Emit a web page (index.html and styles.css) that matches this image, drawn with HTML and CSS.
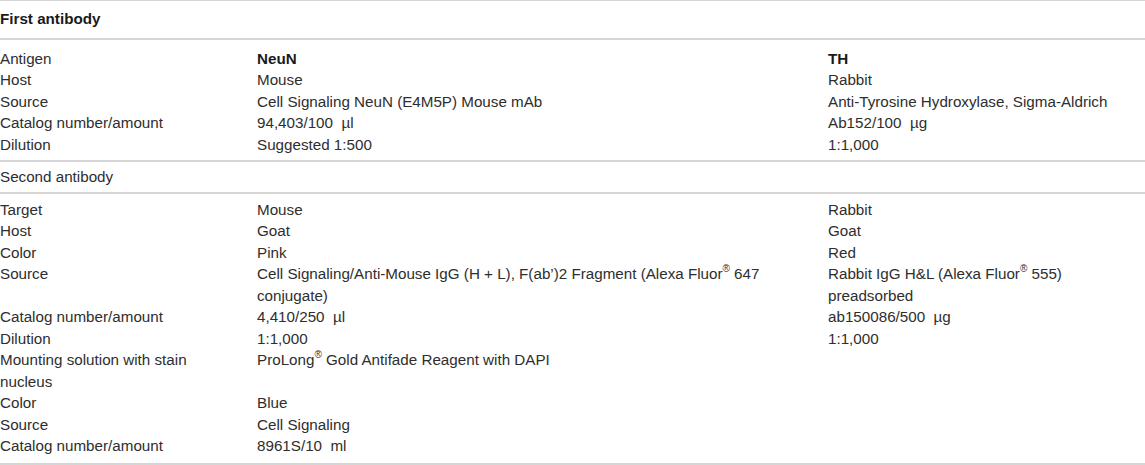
FILE: index.html
```html
<!DOCTYPE html>
<html>
<head>
<meta charset="utf-8">
<link rel="stylesheet" href="styles.css">
</head>
<body>
<table class="tbl">
  <colgroup>
    <col class="c1"><col class="c2"><col class="c3">
  </colgroup>
  <thead>
    <tr class="head"><th colspan="3">First antibody</th></tr>
  </thead>
  <tbody class="sec sec1">
    <tr><td>Antigen</td><td><b>NeuN</b></td><td><b>TH</b></td></tr>
    <tr><td>Host</td><td>Mouse</td><td>Rabbit</td></tr>
    <tr><td>Source</td><td>Cell Signaling NeuN (E4M5P) Mouse mAb</td><td>Anti-Tyrosine Hydroxylase, Sigma-Aldrich</td></tr>
    <tr><td>Catalog number/amount</td><td>94,403/100&nbsp; µl</td><td>Ab152/100&nbsp; µg</td></tr>
    <tr><td>Dilution</td><td>Suggested 1:500</td><td>1:1,000</td></tr>
  </tbody>
  <tbody class="sub">
    <tr><td colspan="3">Second antibody</td></tr>
  </tbody>
  <tbody class="sec sec2">
    <tr><td>Target</td><td>Mouse</td><td>Rabbit</td></tr>
    <tr><td>Host</td><td>Goat</td><td>Goat</td></tr>
    <tr><td>Color</td><td>Pink</td><td>Red</td></tr>
    <tr><td>Source</td><td>Cell Signaling/Anti-Mouse IgG (H + L), F(ab’)2 Fragment (Alexa Fluor<sup>®</sup> 647<br>conjugate)</td><td>Rabbit IgG H&amp;L (Alexa Fluor<sup>®</sup> 555)<br>preadsorbed</td></tr>
    <tr><td>Catalog number/amount</td><td>4,410/250&nbsp; µl</td><td>ab150086/500&nbsp; µg</td></tr>
    <tr><td>Dilution</td><td>1:1,000</td><td>1:1,000</td></tr>
    <tr><td>Mounting solution with stain<br>nucleus</td><td>ProLong<sup>®</sup> Gold Antifade Reagent with DAPI</td><td></td></tr>
    <tr><td>Color</td><td>Blue</td><td></td></tr>
    <tr><td>Source</td><td>Cell Signaling</td><td></td></tr>
    <tr><td>Catalog number/amount</td><td>8961S/10&nbsp; ml</td><td></td></tr>
  </tbody>
</table>
</body>
</html>
```
FILE: styles.css
```css
html, body {
  margin: 0;
  padding: 0;
  background: #ffffff;
}
body {
  font-family: "Liberation Sans", Arial, sans-serif;
  font-size: 15.2px;
  color: #2e2e2e;
}
.tbl {
  width: 1145px;
  border-collapse: collapse;
  table-layout: fixed;
  border-top: 1px solid #d6d6d6;
  border-bottom: 2px solid #d6d6d6;
}
.c1 { width: 257px; }
.c2 { width: 571px; }
.c3 { width: 317px; }
.tbl th,
.tbl td {
  padding: 0 30px 0 0;
  line-height: 21.5px;
  text-align: left;
  vertical-align: top;
  font-weight: normal;
}
.tbl td:nth-child(2) { padding-right: 60px; }
.tbl td:nth-child(3) { padding-right: 0; }
.head th {
  font-weight: bold;
  color: #1a1a1a;
  padding-top: 7px;
  padding-bottom: 8px;
  border-bottom: 2px solid #d6d6d6;
}
b { font-weight: bold; color: #1a1a1a; }
.sec1 tr:first-child td { padding-top: 8px; }
.sec1 tr:last-child td { padding-bottom: 5px; }
.sub td {
  padding-top: 4px;
  padding-bottom: 4px;
  border-top: 2px solid #d6d6d6;
  border-bottom: 2px solid #d6d6d6;
}
.sec2 tr:first-child td { padding-top: 5px; }
.sec2 tr:last-child td { padding-bottom: 6px; }
sup {
  font-size: 10px;
  line-height: 12px;
  vertical-align: top;
}
```
